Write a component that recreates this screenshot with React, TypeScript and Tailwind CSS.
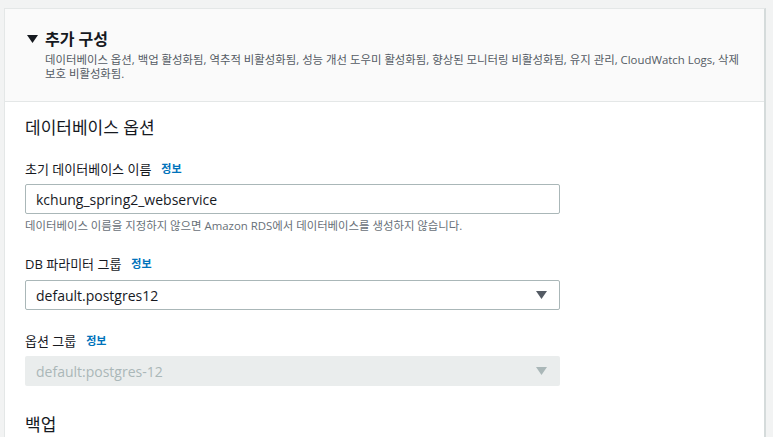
import React from "react";

const font = { fontFamily: '"Open Sans", "Noto Sans CJK KR", sans-serif' };

function Info() {
  return <span className="ml-[10px] text-[11px] font-bold text-[#0073bb]">정보</span>;
}

function Caret({ color }: { color: string }) {
  return (
    <svg width="11" height="8" viewBox="0 0 11 8" className="shrink-0">
      <polygon points="0,0 11,0 5.5,8" fill={color} />
    </svg>
  );
}

export default function App() {
  return (
    <div className="w-[773px] h-[437px] overflow-hidden bg-[#f2f3f3] pt-[8px] pl-[4px]" style={font}>
      <div className="w-[762px] h-[460px] bg-white border border-[#e4e7e7] border-r-2 border-r-[#d5dbdb] flex flex-col">
        <div className="bg-[#fafafa] border-b border-[#e4e7e7] h-[93px] pl-[22px] pt-[20px]">
          <div className="flex items-center">
            <Caret color="#16191f" />
            <span className="ml-[7px] text-[16px] font-bold text-[#16191f] leading-[20px]">추가 구성</span>
          </div>
          <p className="ml-[18px] mt-[4px] text-[11.4px] leading-[14px] text-[#545b64] w-[700px]">
            데이터베이스 옵션, 백업 활성화됨, 역추적 비활성화됨, 성능 개선 도우미 활성화됨, 향상된 모니터링 비활성화됨, 유지 관리, CloudWatch Logs, 삭제 보호 비활성화됨.
          </p>
        </div>
        <div className="pl-[20px] pt-[14px] flex flex-col">
          <h2 className="text-[17px] leading-[24px] text-[#16191f]">데이터베이스 옵션</h2>
          <div className="mt-[20px] text-[13px] leading-[18px] text-[#16191f] flex items-center">
            초기 데이터베이스 이름<Info />
          </div>
          <div className="mt-[6px] w-[535px] h-[30px] border border-[#aab7b8] rounded-[2px] bg-white flex items-center px-[10px] text-[14px] text-[#16191f]">
            kchung_spring2_webservice
          </div>
          <div className="mt-[4px] text-[11.4px] leading-[16px] text-[#687078]">
            데이터베이스 이름을 지정하지 않으면 Amazon RDS에서 데이터베이스를 생성하지 않습니다.
          </div>
          <div className="mt-[21px] text-[13px] leading-[18px] text-[#16191f] flex items-center">
            DB 파라미터 그룹<Info />
          </div>
          <div className="mt-[7px] w-[535px] h-[30px] border border-[#aab7b8] rounded-[2px] bg-white flex items-center justify-between pl-[10px] pr-[12px] text-[14px] text-[#16191f]">
            <span>default.postgres12</span>
            <Caret color="#545b64" />
          </div>
          <div className="mt-[22px] text-[13px] leading-[18px] text-[#16191f] flex items-center">
            옵션 그룹<Info />
          </div>
          <div className="mt-[6px] w-[535px] h-[30px] rounded-[2px] bg-[#eaeded] flex items-center justify-between pl-[11px] pr-[13px] text-[14px] text-[#aab7b8]">
            <span>default:postgres-12</span>
            <Caret color="#aab7b8" />
          </div>
          <h2 className="mt-[27px] text-[17px] leading-[24px] text-[#16191f]">백업</h2>
        </div>
      </div>
    </div>
  );
}
